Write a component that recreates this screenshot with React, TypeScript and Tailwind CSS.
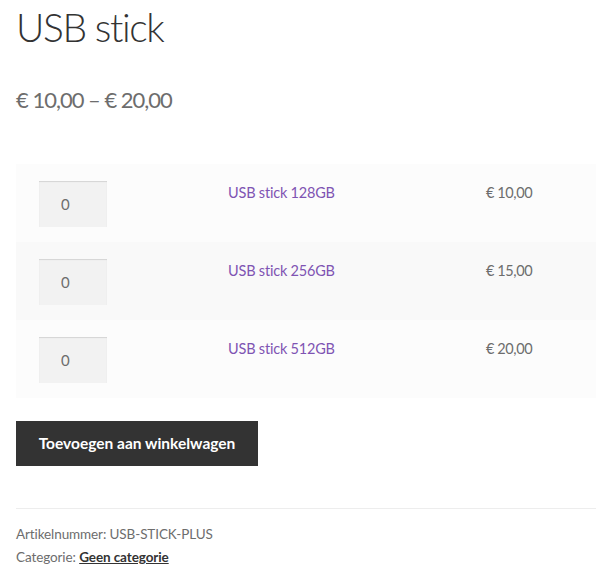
const rows = [
  { name: "USB stick 128GB", price: "€ 10,00", bg: "bg-[#fcfcfc]" },
  { name: "USB stick 256GB", price: "€ 15,00", bg: "bg-[#f9f9f9]" },
  { name: "USB stick 512GB", price: "€ 20,00", bg: "bg-[#fcfcfc]" },
];

const App = () => {
  return (
    <div className="min-h-[583px] bg-white pl-4 text-[#6d6d6d] font-['Lato',sans-serif]">
      <h1 className="pt-[2px] text-[39px] leading-[51px] font-light tracking-[-1.4px] text-[#333333]">USB stick</h1>

      <p className="mt-[29px] text-[22px] leading-[36px] tracking-[-1px] text-[#6d6d6d]">€ 10,00 – € 20,00</p>

      <form className="mt-[46px]">
        <div className="flex flex-col">
          {rows.map((row) => (
            <div key={row.name} className={`grid h-[78px] grid-cols-[189px_258px_1fr] ${row.bg}`}>
              <div className="pl-[23px] pt-[17px]">
                <input
                  type="number"
                  defaultValue={0}
                  className="h-[46px] w-[68px] bg-[#f2f2f2] pl-[22px] text-[15px] text-[#6d6d6d] shadow-[inset_0_1px_1px_rgba(0,0,0,0.125)] outline-none"
                />
              </div>
              <div className="pl-[23px] pt-[16px]">
                <a href="#" className="text-[14.5px] leading-[26px] tracking-[-0.2px] text-[#7f54b3]">{row.name}</a>
              </div>
              <div className="pl-[23px] pt-[16px] text-[14.5px] leading-[26px] tracking-[-0.4px]">{row.price}</div>
            </div>
          ))}
        </div>

        <button
          type="button"
          className="mt-[23px] h-[45px] w-[242px] bg-[#333333] text-[15.5px] font-bold text-white"
        >
          Toevoegen aan winkelwagen
        </button>
      </form>

      <div className="mt-[42px] border-t border-[#ededed] pt-[14px] text-[13.5px] leading-[23px] tracking-[-0.1px]">
        <div>Artikelnummer: USB-STICK-PLUS</div>
        <div>
          Categorie:{" "}
          <a href="#" className="font-bold text-[#333333] underline">Geen categorie</a>
        </div>
      </div>
    </div>
  );
};

export default App;
